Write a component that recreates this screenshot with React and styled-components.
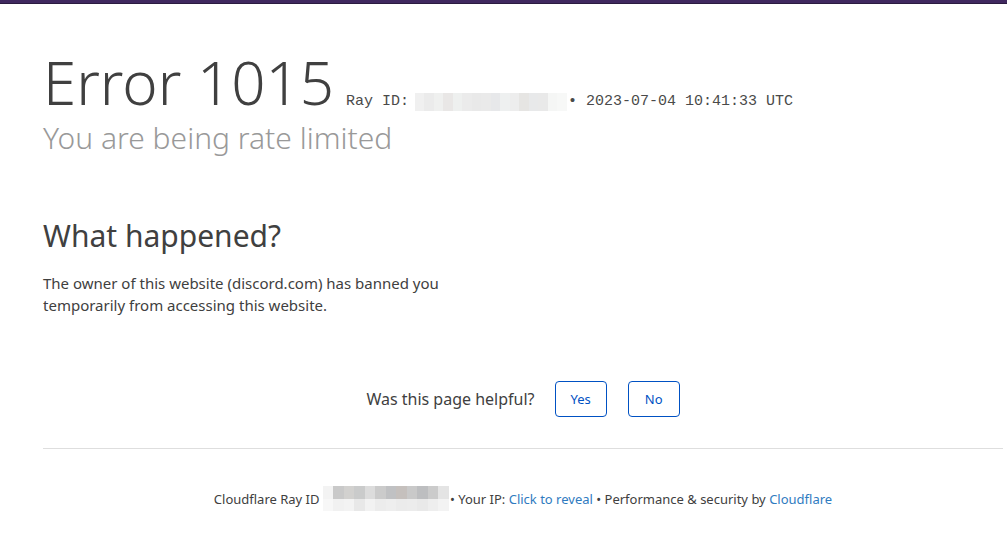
import React from 'react'
import styled, { createGlobalStyle } from 'styled-components'

const GlobalStyle = createGlobalStyle`
  html, body {
    margin: 0;
    padding: 0;
    background: #ffffff;
  }
  body {
    font-family: "Noto Sans", "Open Sans", "Liberation Sans", sans-serif;
    color: #404040;
  }
`

const Page = styled.div`
  border-top: 3px solid #40285f;
  box-shadow: inset 0 1px 0 #2a1a40;
  min-height: 550px;
`

const Container = styled.div`
  width: 960px;
  margin-left: 43px;
  padding-top: 43px;
`

const TitleRow = styled.div`
  display: flex;
  align-items: baseline;
`

const ErrorTitle = styled.h1`
  margin: 0;
  font-size: 60px;
  line-height: 72px;
  font-weight: 300;
  color: #404040;
`

const RayMeta = styled.span`
  display: inline-flex;
  align-items: center;
  margin-left: 12px;
  font-family: "Liberation Mono", "Courier New", monospace;
  font-size: 15px;
  color: #4a4a4a;
  white-space: pre;
`

const Redacted = styled.span`
  display: inline-flex;
  flex-direction: column;
  vertical-align: middle;
  margin: ${p => p.$margin || '0'};
`

const RedactRow = styled.span`
  display: flex;
  height: ${p => p.$h}px;
`

const Cell = styled.span`
  display: block;
  width: ${p => p.$w}px;
  background: ${p => p.$c};
`

const Subtitle = styled.h2`
  margin: 2px 0 0;
  font-size: 30px;
  line-height: 36px;
  font-weight: 300;
  color: #999999;
`

const Section = styled.section`
  margin-top: 62px;
  width: 440px;
`

const SectionTitle = styled.h2`
  margin: 0;
  font-size: 30px;
  line-height: 36px;
  font-weight: 400;
  color: #404040;
`

const Body = styled.p`
  margin: 18px 0 0;
  font-size: 15px;
  line-height: 22px;
`

const Feedback = styled.div`
  display: flex;
  justify-content: center;
  align-items: center;
  margin-top: 65px;
  font-size: 16px;
  line-height: 24px;
`

const FeedbackLabel = styled.span`
  margin-right: 20px;
`

const Button = styled.button`
  height: 36px;
  padding: 0 ${p => p.$pad || 15}px;
  margin-right: ${p => p.$gap || 0}px;
  border: 1px solid #0051c3;
  border-radius: 4px;
  background: #ffffff;
  color: #0051c3;
  font-family: inherit;
  font-size: 13px;
`

const Rule = styled.hr`
  margin: 31px 0 0;
  border: 0;
  border-top: 1px solid #dedede;
`

const Footer = styled.div`
  display: flex;
  justify-content: center;
  align-items: center;
  margin-top: 37px;
  font-size: 13px;
  line-height: 20px;
  color: #404040;
  white-space: pre;
`

const Link = styled.a`
  color: #2f7bbf;
  text-decoration: none;
`

const headerCells = ['#f0f0f0', '#ebebeb', '#eff0ef', '#e9e7e6', '#eef0ef', '#ebebeb', '#e9e9e9', '#eaeaea',
  '#e7e8ea', '#eef0f0', '#ededed', '#e6e5e3', '#e8e9ea', '#e9e9e9', '#f5f6f5', '#f7f8f7']

const footerTop = ['#f3f3f3', '#c9c9c9', '#d2d1cf', '#cacbcb', '#dcdcdc', '#cbcbcb', '#c0c1c3', '#c5c0bd',
  '#c9c9c9', '#bdbec0', '#cbcbcb', '#e4e4e4']
const footerBottom = ['#f7f7f7', '#f1f1f1', '#f3f3f3', '#e8e8e8', '#f2f2f2', '#ececec', '#eeeeee', '#ebebeb',
  '#ececec', '#e9e9e9', '#eeeeee', '#f3f3f3']

function Pixels ({ rows, w, h, margin }) {
  return (
    <Redacted $margin={margin}>
      {rows.map((row, i) => (
        <RedactRow key={i} $h={h[i]}>
          {row.map((c, j) => <Cell key={j} $w={w} $c={c} />)}
        </RedactRow>
      ))}
    </Redacted>
  )
}

export default function App () {
  return (
    <Page>
      <GlobalStyle />
      <Container>
        <TitleRow>
          <ErrorTitle>Error 1015</ErrorTitle>
          <RayMeta>
            {'Ray ID: '}
            <Pixels rows={[headerCells]} w={9.5} h={[18]} margin='0 1px 0 -3px' />
            {'• 2023-07-04 10:41:33 UTC'}
          </RayMeta>
        </TitleRow>
        <Subtitle>You are being rate limited</Subtitle>

        <Section>
          <SectionTitle>What happened?</SectionTitle>
          <Body>The owner of this website (discord.com) has banned you temporarily from accessing this website.</Body>
        </Section>

        <Feedback>
          <FeedbackLabel>Was this page helpful?</FeedbackLabel>
          <Button $pad={15} $gap={21}>Yes</Button>
          <Button $pad={16}>No</Button>
        </Feedback>

        <Rule />

        <Footer>
          Cloudflare Ray ID{' '}
          <Pixels rows={[footerTop, footerBottom]} w={10.5} h={[13, 12]} margin='0 1px 0 0' />
          {'• Your IP: '}
          <Link href='#'>Click to reveal</Link>
          {' • Performance & security by '}
          <Link href='#'>Cloudflare</Link>
        </Footer>
      </Container>
    </Page>
  )
}
